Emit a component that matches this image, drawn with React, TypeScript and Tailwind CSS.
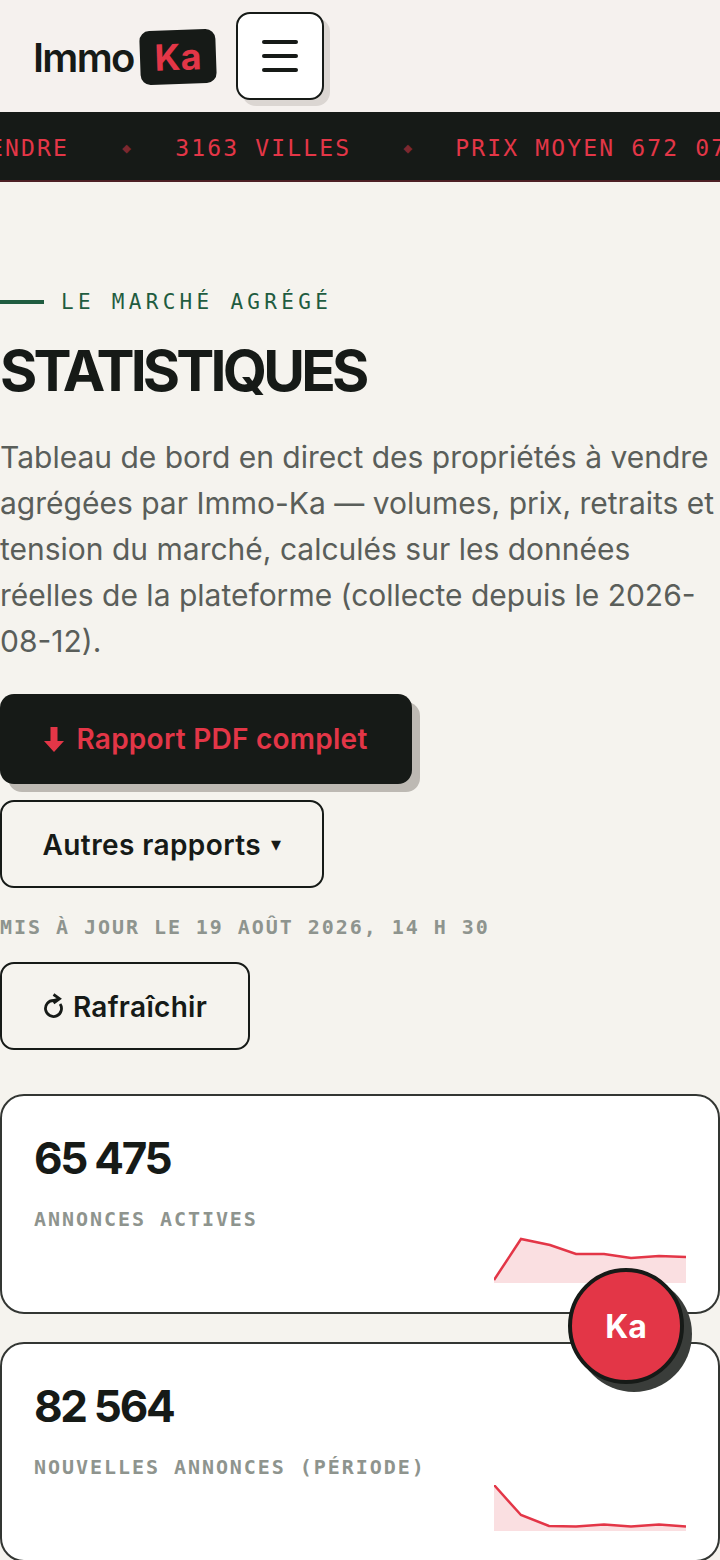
const mono = { fontFamily: '"DejaVu Sans Mono", monospace' };

const stats = [
  {
    value: "65 475",
    label: "ANNONCES ACTIVES",
    line: "0,43 27,2 56,8 82,17 110,17 137,21 165,19 192,20",
  },
  {
    value: "82 564",
    label: "NOUVELLES ANNONCES (PÉRIODE)",
    line: "0,0 27,30 55,41 82,41.5 110,39.5 137,41.5 165,39.5 192,41.5",
  },
];

function Sparkline({ line }: { line: string }) {
  return (
    <svg width="192" height="46" viewBox="0 0 192 46" className="block">
      <polygon points={`0,46 ${line} 192,46`} fill="#e33647" fillOpacity="0.16" />
      <polyline points={line} fill="none" stroke="#e33647" strokeWidth="2.5" />
    </svg>
  );
}

export default function App() {
  return (
    <div
      className="relative h-[1560px] w-[720px] overflow-hidden bg-[#f5f3ee] text-[#161a17]"
      style={{ fontFamily: 'Inter, sans-serif' }}
    >
      <header className="flex h-[112px] items-center bg-[#f5f1ee] pl-[33px]">
        <span className="pt-[4px] text-[40px] font-semibold tracking-[-1.7px]">Immo</span>
        <span className="ml-[6px] mt-[2px] flex h-[54px] w-[76px] -rotate-2 items-center justify-center rounded-[10px] bg-[#161a17] text-[36px] font-bold text-[#e33647]">
          Ka
        </span>
        <button className="ml-[20px] flex h-[88px] w-[88px] flex-col items-center justify-center gap-[10px] rounded-[14px] border-2 border-[#161a17] bg-white shadow-[6px_6px_0_#dbd6d2]">
          <span className="h-[4px] w-[36px] rounded-full bg-[#161a17]" />
          <span className="h-[4px] w-[36px] rounded-full bg-[#161a17]" />
          <span className="h-[4px] w-[36px] rounded-full bg-[#161a17]" />
        </button>
      </header>

      <div
        className="flex h-[70px] items-center overflow-hidden whitespace-nowrap border-b-2 border-[#4d1f24] bg-[#161a17] pt-[4px] text-[23px] tracking-[2.15px] text-[#e33647]"
        style={mono}
      >
        <span className="ml-[-11px]">ENDRE</span>
        <span className="ml-[53px] text-[15px] opacity-50">◆</span>
        <span className="ml-[42px]">3163 VILLES</span>
        <span className="ml-[52px] text-[15px] opacity-50">◆</span>
        <span className="ml-[41px]">PRIX MOYEN 672 070</span>
      </div>

      <main className="pt-[106px]">
        <div className="flex items-center gap-[17px]">
          <span className="h-[4px] w-[44px] bg-[#1f5c40]" />
          <span className="text-[21px] leading-[28px] tracking-[4.3px] text-[#1f5c40]" style={mono}>
            LE MARCHÉ AGRÉGÉ
          </span>
        </div>
        <h1 className="mt-[20px] text-[57px] font-bold leading-[70px] tracking-[-3.8px]">STATISTIQUES</h1>
        <p className="mt-[28px] text-[30px] leading-[46px] text-[#5a5e5a]">
          Tableau de bord en direct des propriétés à vendre agrégées par Immo-Ka — volumes, prix, retraits et tension du
          marché, calculés sur les données réelles de la plateforme (collecte depuis le 2026-08-12).
        </p>

        <button className="mt-[30px] flex h-[90px] w-[412px] items-center justify-center gap-[12px] rounded-[14px] bg-[#161a17] text-[28px] font-semibold tracking-[0.25px] text-[#e33647] shadow-[8px_8px_0_#bdb9b3]">
          <svg width="20" height="25" viewBox="0 0 20 25" fill="#e33647">
            <polygon points="6.5,0 13.5,0 13.5,14 20,14 10,25 0,14 6.5,14" />
          </svg>
          Rapport PDF complet
        </button>
        <button className="mt-[16px] flex h-[88px] w-[324px] items-center justify-center gap-[10px] rounded-[14px] border-2 border-[#161a17] text-[28px] font-semibold tracking-[0.4px]">
          <span className="pt-[2px]">Autres rapports</span>
          <span className="text-[20px]" style={{ fontFamily: '"DejaVu Sans", sans-serif' }}>▾</span>
        </button>
        <div className="mt-[25px] text-[20px] font-bold leading-[28px] tracking-[1.95px] text-[#8e948e]" style={mono}>
          MIS À JOUR LE 19 AOÛT 2026, 14 H 30
        </div>
        <button className="mt-[21px] flex h-[88px] w-[250px] items-center justify-center gap-[8px] rounded-[14px] border-2 border-[#161a17] text-[28px] font-semibold tracking-[0.3px]">
          <svg width="22" height="26" viewBox="0 0 22 26" fill="none" stroke="#161a17" strokeWidth="2.8">
            <path d="M15.5 6 10.5 7.5A8 8 0 1 0 17.1 11" />
            <path d="M10.5 1.5 16.5 5.7 10.5 10" />
          </svg>
          <span className="pt-[2px]">Rafraîchir</span>
        </button>

        <div className="mt-[44px] flex flex-col gap-[28px]">
          {stats.map((stat) => (
            <div key={stat.value} className="h-[220px] rounded-[24px] border-2 border-[#333633] bg-white px-[32px] pt-[32px]">
              <div className="text-[44px] font-bold leading-[60px] tracking-[-2.3px]">{stat.value}</div>
              <div className="mt-[17px] text-[20px] font-bold leading-[28px] tracking-[1.95px] text-[#8e948e]" style={mono}>
                {stat.label}
              </div>
              <div className="mt-[4px] flex justify-end">
                <Sparkline line={stat.line} />
              </div>
            </div>
          ))}
        </div>
      </main>

      <button className="absolute left-[568px] top-[1268px] flex h-[116px] w-[116px] items-center justify-center rounded-full border-4 border-[#161a17] bg-[#e33647] pt-[2px] text-[32px] font-bold text-white shadow-[8px_8px_0_#3a3d3a]">
        Ka
      </button>
    </div>
  );
}
